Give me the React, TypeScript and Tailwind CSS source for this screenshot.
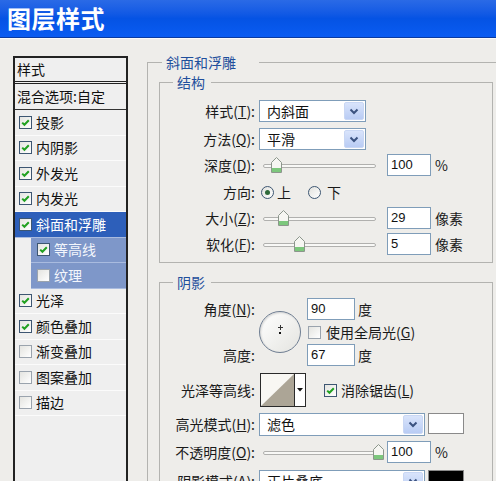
import React from "react";

type Item = { t: string; c: boolean; sel?: boolean; sub?: boolean };

const items: Item[] = [
  { t: "投影", c: true },
  { t: "内阴影", c: true },
  { t: "外发光", c: true },
  { t: "内发光", c: true },
  { t: "斜面和浮雕", c: true, sel: true },
  { t: "等高线", c: true, sub: true },
  { t: "纹理", c: false, sub: true },
  { t: "光泽", c: true },
  { t: "颜色叠加", c: true },
  { t: "渐变叠加", c: false },
  { t: "图案叠加", c: false },
  { t: "描边", c: false },
];

function Check({ checked }: { checked: boolean }) {
  return (
    <span
      className={
        "flex h-[13px] w-[13px] shrink-0 items-center justify-center border bg-gradient-to-br from-[#e4e4e0] to-white " +
        (checked ? "border-[#3d5672]" : "border-[#9aa3ad]")
      }
    >
      {checked ? (
        <svg width="11" height="11" viewBox="0 0 11 11">
          <path d="M2.2 5.6 L4.4 7.8 L8.8 3.2" fill="none" stroke="#21a121" strokeWidth="2" />
        </svg>
      ) : null}
    </span>
  );
}

function Radio({ checked }: { checked: boolean }) {
  return (
    <span className="flex h-[13px] w-[13px] shrink-0 items-center justify-center rounded-full border border-[#3d5672] bg-gradient-to-br from-[#e2e2de] to-white">
      {checked ? <span className="h-[5px] w-[5px] rounded-full bg-[#2f6a3a]" /> : null}
    </span>
  );
}

function Chevron() {
  return (
    <span className="m-[1px] flex w-[20px] items-center justify-center rounded-[2px] border border-[#c9d7f4] bg-gradient-to-b from-[#d9e4fb] to-[#b9ccf4]">
      <svg width="10" height="7" viewBox="0 0 10 7">
        <path d="M1.5 1.5 L5 5 L8.5 1.5" fill="none" stroke="#3b5280" strokeWidth="2" />
      </svg>
    </span>
  );
}

function Dropdown({ text, w }: { text: string; w: string }) {
  return (
    <div className={"flex h-[22px] border border-[#7f9db9] bg-white " + w}>
      <span className="flex flex-1 items-center pl-[7px] text-[14px] text-[#111]">{text}</span>
      <Chevron />
    </div>
  );
}

function NumBox({ v }: { v: string }) {
  return (
    <div className="flex h-[22px] w-[44px] items-center border border-[#7f9db9] bg-white pl-[3px] font-['Liberation_Sans',sans-serif] text-[13px] text-[#111]">
      {v}
    </div>
  );
}

function Thumb() {
  return (
    <svg width="11" height="16" viewBox="0 0 11 16">
      <path d="M0.5 5.5 L5.5 0.5 L10.5 5.5 V15.5 H0.5 Z" fill="#f6f6f2" stroke="#8c968c" />
      <rect x="1" y="11" width="9" height="4" fill="#7cc77c" />
    </svg>
  );
}

function Slider({ left }: { left: string }) {
  return (
    <div className="relative ml-[8px] h-[22px] w-[113px]">
      <div className="absolute left-0 right-0 top-[10px] h-[4px] rounded-full border border-[#b0b0ae] bg-[#f8f8f6]" />
      <div className={"absolute top-[3px] " + left}>
        <Thumb />
      </div>
    </div>
  );
}

function Label({ children }: { children: React.ReactNode }) {
  return <span className="w-[95px] shrink-0 text-right text-[14px] text-[#1a1a1a]">{children}</span>;
}

function Legend({ children, ml, pr }: { children: React.ReactNode; ml: string; pr: string }) {
  return (
    <legend className={"pl-[4px] text-[14px] leading-[20px] text-[#1f4f9c] " + ml + " " + pr}>{children}</legend>
  );
}

export default function App() {
  return (
    <div className="h-[481px] w-[496px] overflow-hidden bg-[#eeedea] font-['Noto_Sans_CJK_SC','Noto_Sans',sans-serif]">
      <div className="flex h-[38px] items-center border-b border-[#0a3aa0] bg-gradient-to-b from-[#2a6ae6] via-[#0553e4] to-[#0a5cf2] pb-[2px] pl-[7px]">
        <span className="text-[24px] font-bold tracking-[0.5px] text-white">图层样式</span>
      </div>
      <div className="flex border-t border-[#fafafa]">
        {/* left style list */}
        <div className="ml-[13px] mt-[17px] h-[440px] w-[115px] shrink-0 border-x-2 border-t-2 border-[#222] bg-[#efefef]">
          <div className="flex h-[26px] items-center border-b-[3px] border-double border-[#222] pl-[2px] text-[14px] text-[#111]">
            样式
          </div>
          <div className="flex h-[26px] items-center border-b border-[#333] pl-[2px] text-[14px] text-[#111]">
            混合选项:自定
          </div>
          {items.map((it) =>
            it.sub ? (
              <div key={it.t} className="flex h-[25.5px] pl-[16px]">
                <div className="flex flex-1 items-center gap-[4px] border-b border-[#a9bbdf] bg-[#7e97c9] pl-[6px] text-[14px] text-[#f3f6fc]">
                  <Check checked={it.c} />
                  {it.t}
                </div>
              </div>
            ) : (
              <div
                key={it.t}
                className={
                  "flex h-[25.5px] items-center gap-[4px] border-b pl-[4px] text-[14px] " +
                  (it.sel ? "border-[#a9bbdf] bg-[#2d5fba] text-white" : "border-[#fbfbfb] text-[#111]")
                }
              >
                <Check checked={it.c} />
                {it.t}
              </div>
            )
          )}
        </div>
        <div className="ml-[2px] mt-[17px] h-[440px] w-px bg-[#c9c9c6]" />

        {/* right panel */}
        <fieldset className="ml-[17px] mt-[13px] h-[440px] w-[360px] shrink-0 border border-[#b3b3b0] pl-[11px]">
          <Legend ml="ml-[3px]" pr="pr-[23px]">斜面和浮雕</Legend>

          <fieldset className="w-[334px] border border-[#b3b3b0] pb-[7px]">
            <Legend ml="ml-[13px]" pr="pr-[6px]">结构</Legend>
            <div className="mt-[8px] flex h-[22px] items-center">
              <Label>
                样式(<span className="underline">T</span>):
              </Label>
              <div className="ml-[4px]">
                <Dropdown text="内斜面" w="w-[107px]" />
              </div>
            </div>
            <div className="mt-[6px] flex h-[22px] items-center">
              <Label>
                方法(<span className="underline">Q</span>):
              </Label>
              <div className="ml-[4px]">
                <Dropdown text="平滑" w="w-[107px]" />
              </div>
            </div>
            <div className="mt-[4px] flex h-[22px] items-center">
              <Label>
                深度(<span className="underline">D</span>):
              </Label>
              <Slider left="left-[8px]" />
              <div className="ml-[11px]">
                <NumBox v="100" />
              </div>
              <span className="ml-[4px] text-[14px] text-[#1a1a1a]">%</span>
            </div>
            <div className="mt-[5px] flex h-[22px] items-center text-[14px] text-[#1a1a1a]">
              <Label>方向:</Label>
              <span className="ml-[6px]">
                <Radio checked />
              </span>
              <span className="ml-[3px]">上</span>
              <span className="ml-[17px]">
                <Radio checked={false} />
              </span>
              <span className="ml-[6px]">下</span>
            </div>
            <div className="mt-[4px] flex h-[22px] items-center">
              <Label>
                大小(<span className="underline">Z</span>):
              </Label>
              <Slider left="left-[15px]" />
              <div className="ml-[11px]">
                <NumBox v="29" />
              </div>
              <span className="ml-[4px] text-[14px] text-[#1a1a1a]">像素</span>
            </div>
            <div className="mt-[4px] flex h-[22px] items-center">
              <Label>
                软化(<span className="underline">F</span>):
              </Label>
              <Slider left="left-[31px]" />
              <div className="ml-[11px]">
                <NumBox v="5" />
              </div>
              <span className="ml-[4px] text-[14px] text-[#1a1a1a]">像素</span>
            </div>
          </fieldset>

          <fieldset className="mt-[9px] h-[240px] w-[334px] border border-[#b3b3b0]">
            <Legend ml="ml-[13px]" pr="pr-[6px]">阴影</Legend>

            <div className="flex">
              <div className="flex flex-col">
                <div className="mt-[6px] flex h-[22px] items-center">
                  <Label>
                    角度(<span className="underline">N</span>):
                  </Label>
                </div>
                <div className="h-[24px]" />
                <div className="flex h-[22px] items-center">
                  <Label>高度:</Label>
                </div>
              </div>
              <div className="relative ml-[4px] mt-[19px] h-[42px] w-[42px] rounded-full border border-[#6f7e92] bg-gradient-to-br from-white to-[#e4e4e0] shadow-[inset_1px_1px_2px_rgba(0,0,0,0.15)]">
                <span className="absolute left-[20px] top-[13px] h-[5px] w-px bg-[#333]" />
                <span className="absolute left-[18px] top-[15px] h-px w-[5px] bg-[#333]" />
                <span className="absolute left-[19px] top-[20px] h-[2px] w-[2px] bg-[#111]" />
              </div>
              <div className="ml-[6px] flex flex-col text-[14px] text-[#1a1a1a]">
                <div className="mt-[6px] flex h-[22px] items-center">
                  <div className="flex h-[22px] w-[48px] items-center border border-[#7f9db9] bg-white pl-[3px] font-['Liberation_Sans',sans-serif] text-[13px] text-[#111]">
                    90
                  </div>
                  <span className="ml-[3px]">度</span>
                </div>
                <div className="flex h-[24px] items-center">
                  <span className="ml-[1px]">
                    <Check checked={false} />
                  </span>
                  <span className="ml-[5px]">
                    使用全局光(<span className="underline">G</span>)
                  </span>
                </div>
                <div className="flex h-[22px] items-center">
                  <div className="flex h-[22px] w-[48px] items-center border border-[#7f9db9] bg-white pl-[3px] font-['Liberation_Sans',sans-serif] text-[13px] text-[#111]">
                    67
                  </div>
                  <span className="ml-[3px]">度</span>
                </div>
              </div>
            </div>

            <div className="mt-[7px] flex h-[34px] items-center text-[14px] text-[#1a1a1a]">
              <Label>光泽等高线:</Label>
              <div className="ml-[5px] flex h-[34px] w-[46px] border border-[#2a2a2a] bg-[#f8f7f3]">
                <svg width="33" height="32" viewBox="0 0 33 32" className="block">
                  <polygon points="0,32 33,0 33,32" fill="#aca596" />
                </svg>
                <div className="w-px bg-[#2a2a2a]" />
                <div className="flex flex-1 items-center justify-center bg-white">
                  <svg width="6" height="4" viewBox="0 0 6 4">
                    <polygon points="0,0 6,0 3,3.5" fill="#111" />
                  </svg>
                </div>
              </div>
              <span className="ml-[18px]">
                <Check checked />
              </span>
              <span className="ml-[4px]">
                消除锯齿(<span className="underline">L</span>)
              </span>
            </div>

            <div className="mt-[6px] flex h-[23px] items-start">
              <div className="flex h-[23px] items-center">
                <Label>
                  高光模式(<span className="underline">H</span>):
                </Label>
              </div>
              <div className="ml-[4px]">
                <Dropdown text="滤色" w="w-[166px] h-[23px]" />
              </div>
              <div className="ml-[3px] h-[21px] w-[36px] border border-[#8a8a8a] bg-white" />
            </div>

            <div className="mt-[5px] flex h-[22px] items-center">
              <Label>
                不透明度(<span className="underline">O</span>):
              </Label>
              <Slider left="left-[110px]" />
              <div className="ml-[11px]">
                <NumBox v="100" />
              </div>
              <span className="ml-[4px] text-[14px] text-[#1a1a1a]">%</span>
            </div>

            <div className="mt-[7px] flex h-[23px] items-start">
              <div className="flex h-[23px] items-center">
                <Label>
                  阴影模式(<span className="underline">A</span>):
                </Label>
              </div>
              <div className="ml-[4px]">
                <Dropdown text="正片叠底" w="w-[166px] h-[23px]" />
              </div>
              <div className="ml-[3px] h-[21px] w-[36px] border border-[#8a8a8a] bg-black" />
            </div>
          </fieldset>
        </fieldset>
      </div>
    </div>
  );
}
